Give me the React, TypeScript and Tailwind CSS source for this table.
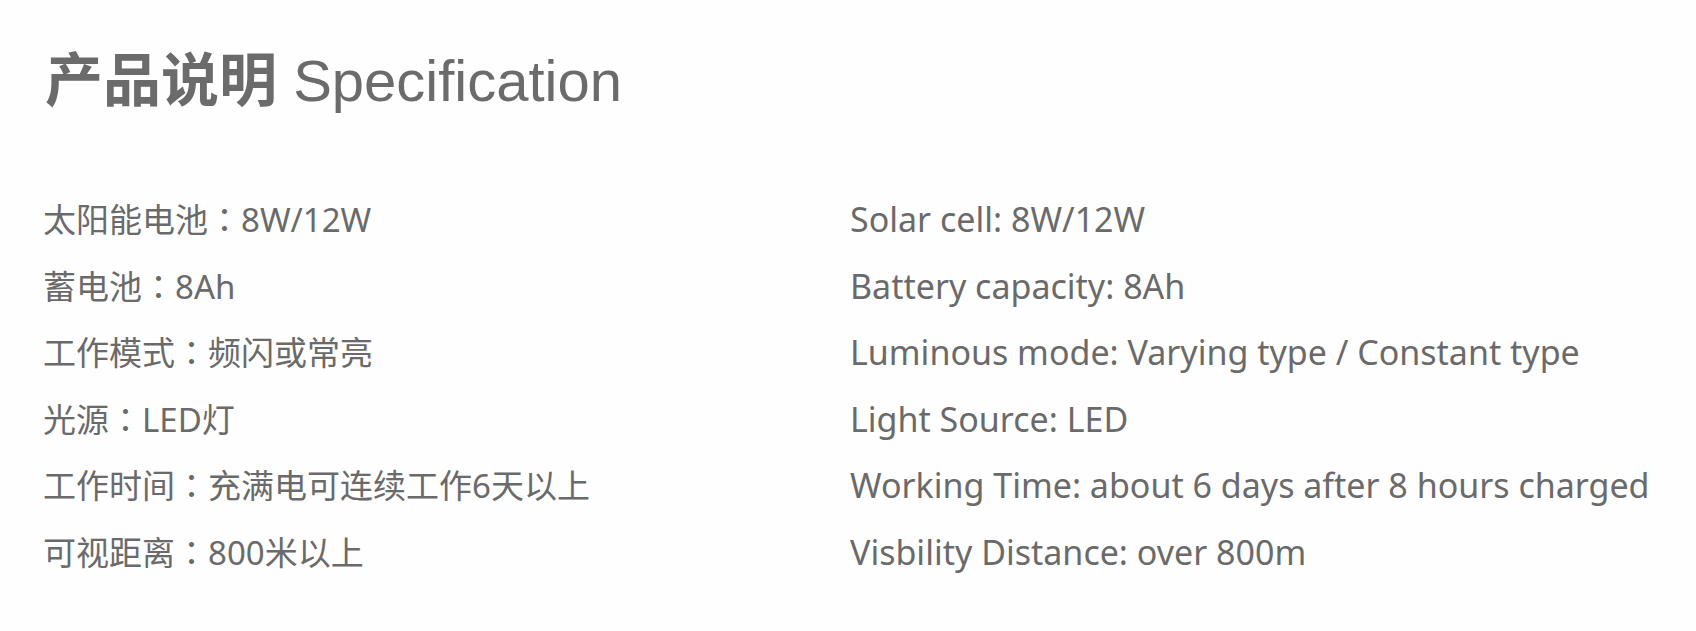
const specs: [string, string, string][] = [
  ["太阳能电池", "8W/12W", "Solar cell: 8W/12W"],
  ["蓄电池", "8Ah", "Battery capacity: 8Ah"],
  ["工作模式", "频闪或常亮", "Luminous mode: Varying type / Constant type"],
  ["光源", "LED灯", "Light Source: LED"],
  ["工作时间", "充满电可连续工作6天以上", "Working Time: about 6 days after 8 hours charged"],
  ["可视距离", "800米以上", "Visbility Distance: over 800m"],
];

export default function App() {
  return (
    <div className="w-[1696px] h-[631px] bg-[#fefefe] overflow-hidden text-[#6a6a6a]">
      <h1 className="pl-[45px] pt-[47px] text-[58px] leading-[68px] font-['Liberation_Sans','Noto_Sans_CJK_SC',sans-serif] text-[#6b6b6b]">
        <span className="font-bold">产品说明</span> Specification
      </h1>

      <div className="mt-[71px] grid grid-cols-[807px_1fr] auto-rows-[66.5px] items-center pl-[43px]">
        {specs.map(([label, value, en], i) => (
          <div key={i} className="contents">
            <div className="whitespace-nowrap text-[33px] leading-[40px] font-['Noto_Sans','Noto_Sans_CJK_SC',sans-serif]">
              {label}
              <span className="font-['Noto_Sans_CJK_TC',sans-serif]">：</span>
              {value}
            </div>
            <div className="whitespace-nowrap text-[34px] leading-[40px] font-['Noto_Sans',sans-serif]">{en}</div>
          </div>
        ))}
      </div>
    </div>
  );
}
